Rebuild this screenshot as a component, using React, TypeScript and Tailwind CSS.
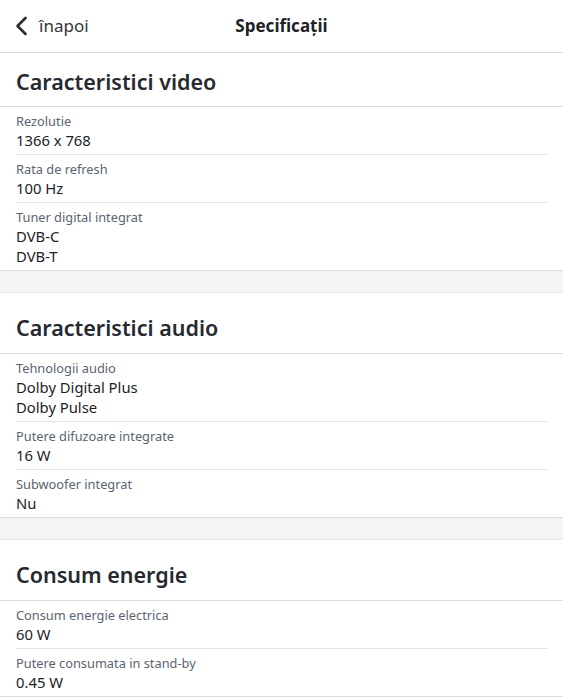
import React from "react";

type Spec = { label: string; values: string[] };
type Group = { title: string; specs: Spec[] };

const groups: Group[] = [
  {
    title: "Caracteristici video",
    specs: [
      { label: "Rezolutie", values: ["1366 x 768"] },
      { label: "Rata de refresh", values: ["100 Hz"] },
      { label: "Tuner digital integrat", values: ["DVB-C", "DVB-T"] },
    ],
  },
  {
    title: "Caracteristici audio",
    specs: [
      { label: "Tehnologii audio", values: ["Dolby Digital Plus", "Dolby Pulse"] },
      { label: "Putere difuzoare integrate", values: ["16 W"] },
      { label: "Subwoofer integrat", values: ["Nu"] },
    ],
  },
  {
    title: "Consum energie",
    specs: [
      { label: "Consum energie electrica", values: ["60 W"] },
      { label: "Putere consumata in stand-by", values: ["0.45 W"] },
    ],
  },
];

const SpecRow = ({ spec, last }: { spec: Spec; last: boolean }) => (
  <div
    className={`ml-4 mr-[15px] pt-[5px] pb-[4px] ${
      last ? "" : "border-b border-[#e2e3e5]"
    }`}
  >
    <div className="text-[12.8px] leading-[18px] text-[#5b6371]">{spec.label}</div>
    {spec.values.map((v) => (
      <div key={v} className="text-[14.8px] leading-[20px] text-[#1e2227]">
        {v}
      </div>
    ))}
  </div>
);

const App = () => {
  return (
    <div className="w-[563px] h-[699px] overflow-hidden bg-white font-['Noto_Sans',sans-serif]">
      <div className="h-[53px] flex items-center relative border-b border-[#dcdcdc]">
        <div className="flex items-center pl-[15px] gap-[11px]">
          <svg width="13" height="20" viewBox="0 0 13 20" fill="none">
            <polyline
              points="10.5,2 2.5,10 10.5,18"
              stroke="#2a2d31"
              strokeWidth="2.6"
              strokeLinecap="round"
              strokeLinejoin="round"
            />
          </svg>
          <span className="text-[17px] text-[#33363b]">înapoi</span>
        </div>
        <div className="absolute inset-x-0 text-center text-[17px] font-bold text-[#1e2227] pointer-events-none">
          Specificații
        </div>
      </div>

      {groups.map((g, gi) => (
        <div key={g.title}>
          {gi > 0 && <div className="h-[21px] bg-[#f3f4f6]" />}
          <div className={gi === 0 ? "border-b border-[#dcdcdc]" : "border-t border-[#e6e7e9] border-b border-b-[#dcdcdc]"}>
            <div
              className={`px-4 text-[21.5px] leading-[30px] font-semibold text-[#262a30] ${
                gi === 0 ? "pt-[14px] pb-[9px]" : "pt-[20px] pb-[10px]"
              }`}
            >
              {g.title}
            </div>
          </div>
          <div className="border-b border-[#dcdcdc]">
            {g.specs.map((s, si) => (
              <SpecRow key={s.label} spec={s} last={si === g.specs.length - 1} />
            ))}
          </div>
        </div>
      ))}
    </div>
  );
};

export default App;
